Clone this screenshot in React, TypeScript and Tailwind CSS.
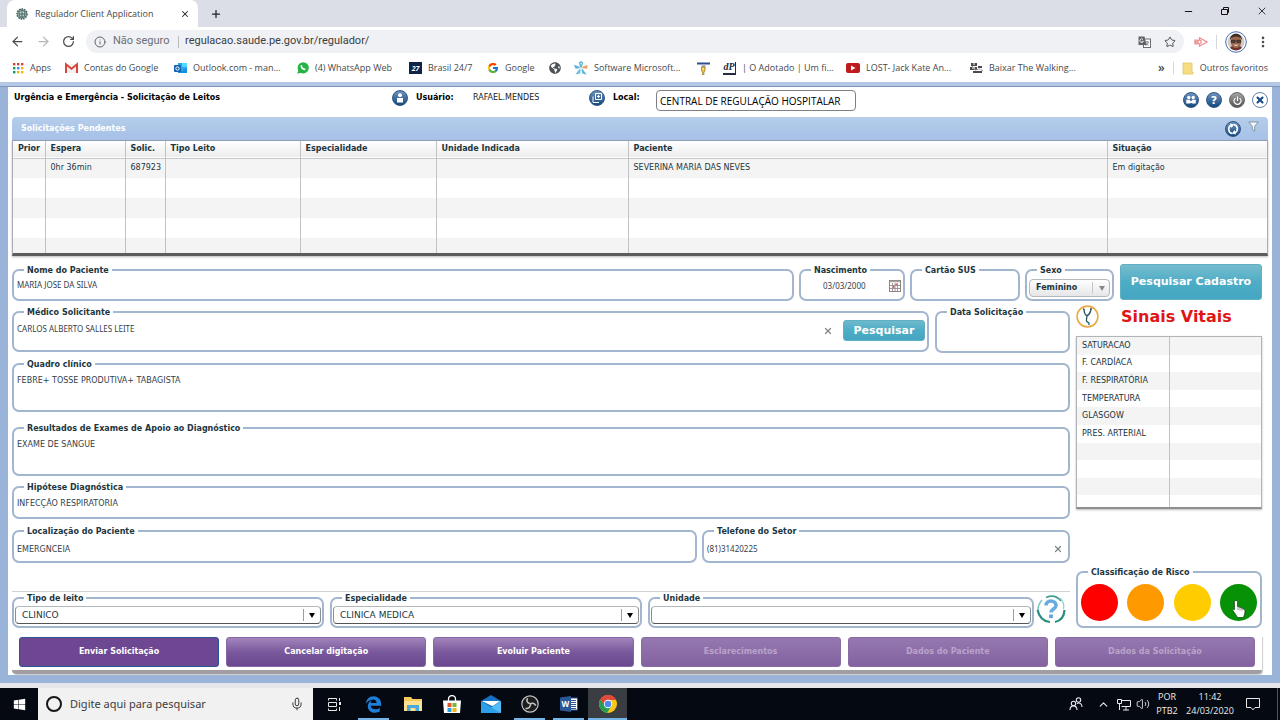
import React from 'react';
import { ArrowLeft, ArrowRight, RotateCw, Info, X, Plus, Star, Minus, MoreVertical, Mic, ChevronUp, Volume2, Power } from 'lucide-react';
import { FcGoogle } from 'react-icons/fc';
import { FaWhatsapp, FaWindows, FaEdgeLegacy, FaGlobeAmericas } from 'react-icons/fa';

interface FieldProps {
    id: string;
    label: string;
    className?: string;
    children?: React.ReactNode;
}

const Field: React.FC<FieldProps> = ({ id, label, className = '', children }) => (
    <fieldset className={`min-w-0 rounded-[7px] border-2 border-[#a3b6d0] ${className}`}>
        <legend className="ml-[10px] px-[3px] h-3 text-[8px] leading-[14px] font-bold text-[#1c3640] whitespace-nowrap">
            <label htmlFor={id}>{label}</label>
        </legend>
        {children}
    </fieldset>
);

const inputClass = 'block w-full min-w-0 bg-transparent px-[3px] text-[8px] leading-3 text-[#33414a] outline-none resize-none';
const narrowInput = `${inputClass} font-['Noto_Sans',sans-serif]`;

/* ---------- ícones ---------- */

const CrestIcon = () => (
    <svg width="12" height="12" viewBox="0 0 12 12">
        <circle cx="6" cy="6" r="5" fill="#8faaa2" stroke="#3c5e5a" strokeWidth="1.500" strokeDasharray="1.500 1" />
        <path d="M3 4l3-2 3 2-1 5H4z" fill="#d5dfdc" stroke="#31525c" strokeWidth=".8" />
        <path d="M6 3v6M4 6h4" stroke="#3a5f54" />
    </svg>
);

const AppsIcon = () => (
    <svg width="12" height="12" viewBox="0 0 12 12">
        {['#db4437', '#db4437', '#db4437', '#0f9d58', '#4285f4', '#f4b400', '#0f9d58', '#f4b400', '#f4b400'].map((c, i) => (
            <rect key={i} x={1 + (i % 3) * 4} y={1 + Math.floor(i / 3) * 4} width="2.4" height="2.4" fill={c} />
        ))}
    </svg>
);

const GmailIcon = () => (
    <svg width="13" height="12" viewBox="0 0 13 12">
        <path d="M1 2h11v9H1z" fill="#f1f1f1" />
        <path d="M1 11V2.3l5.5 4.5L12 2.3V11" fill="none" stroke="#d8453a" strokeWidth="2" />
    </svg>
);

const OutlookIcon = () => (
    <svg width="13" height="12" viewBox="0 0 13 12">
        <path d="M4 1h9v10H4z" fill="#28a8ea" />
        <path d="M8 1h5v4H8z" fill="#50d9ff" />
        <path d="M4 6l4 3 5-3v5H4z" fill="#1490df" />
        <rect y="3" width="7" height="7" rx="1" fill="#0f62b5" />
        <circle cx="3.5" cy="6.5" r="1.7" fill="none" stroke="#fff" />
    </svg>
);

const WhatsIcon = () => (
    <svg width="12" height="12" viewBox="0 0 12 12">
        <circle cx="6.200" cy="5.800" r="5.600" fill="#25b343" />
        <path d="M.3 11.700L1.500 8l2.700 2.700z" fill="#25b343" />
        <path d="M3.800 3.300c.9-1 1.500.2 1.600 1-.6.7 1.400 2.500 2 2 .8 0 1.800.8 1 1.500-1.800 1.700-6-2.200-4.600-4.500z" fill="#fff" />
    </svg>
);

const Badge247 = () => (
    <span className="flex h-3 w-[13px] items-center justify-center bg-[#0d2347] text-[7px] font-bold italic leading-none text-white">27</span>
);

const StarfishIcon = () => (
    <svg width="14" height="14" viewBox="0 0 14 14" fill="none" strokeWidth="1.4">
        <path d="M7 6L5.500 2 7 .8 8.500 2z" stroke="#5ab5da" />
        <path d="M8.500 6.500L12.800 5 12.500 7z" stroke="#e5a46a" />
        <path d="M8 8.500l3 4-2-.5z" stroke="#5ab5da" />
        <path d="M6 8.500l-3 4 2.500-.5z" stroke="#6cc0dd" />
        <path d="M5.500 6.500L1.200 5l.8 2z" stroke="#5ab5da" />
    </svg>
);

const TIcon = () => (
    <svg width="13" height="13" viewBox="0 0 13 13">
        <path d="M0 1.500h13" stroke="#2e4d8c" strokeWidth="2" />
        <path d="M4.500 2.500v4h4v-4" fill="#a9b7cf" />
        <path d="M4.500 5h3.500v4l-1 1v3H5.500v-3l-1-1z" fill="#f0b93c" stroke="#8d6b2c" strokeWidth=".6" />
        <circle cx="6.200" cy="7" r=".8" fill="#fff" />
    </svg>
);

const DpIcon = () => (
    <span className="flex h-[13px] w-[13px] items-center justify-center border-b-2 border-r border-[#222c3c] font-['Liberation_Serif',serif] text-[10px] font-bold italic leading-none text-[#222c3c]">dP</span>
);

const YoutubeIcon = () => (
    <svg width="14" height="12" viewBox="0 0 14 12">
        <rect y="1" width="14" height="10" rx="2" fill="#c01a1c" />
        <path d="M5 3.500v5L9.500 6z" fill="#fff" />
    </svg>
);

const WalkingIcon = () => (
    <svg width="13" height="12" viewBox="0 0 13 12">
        <path d="M1 1h6v3H1zM0 5h7v3H0zM3 9h9v2H3zM8 4h4v2H8z" fill="#4a4a4a" />
        <path d="M2 4l3 4 5-1 3 2" stroke="#8a8a8a" fill="none" />
        <path d="M3 2h2M2 6h3M8 8h3" stroke="#fff" />
    </svg>
);

const FolderIcon = () => (
    <svg width="12" height="13" viewBox="0 0 12 13">
        <path d="M1 1h9v9h1v2H1z" fill="#f6dd82" stroke="#e3c768" strokeWidth=".8" />
    </svg>
);

const TranslateIcon = () => (
    <svg width="13" height="12" viewBox="0 0 13 12">
        <rect x="5.500" y="3" width="7" height="8.500" fill="#fff" stroke="#6b6e72" />
        <path d="M7 6h4M9 5v1M7.500 9.500c2-1 2.500-2 2.700-3.500M8 7.500l2.500 2" stroke="#6b6e72" strokeWidth=".8" fill="none" />
        <path d="M.5.5h6l2 8.500h-8z" fill="#5f6368" />
        <path d="M5 3.500a1.800 1.800 0 1 0 .3 1.800H3.800" stroke="#fff" strokeWidth=".9" fill="none" />
    </svg>
);

const ExtensionIcon = () => (
    <svg width="14" height="12" viewBox="0 0 14 12" fill="none" stroke="#ef9090" strokeWidth="1.300">
        <path d="M5.500 4V1.800L13 6l-7.500 4.200V8" />
        <path d="M1.200 3.500v5M3.200 3.500v5" strokeWidth="1.800" />
        <circle cx="5.500" cy="6" r="1.800" />
    </svg>
);

const AvatarIcon = () => (
    <svg width="22" height="22" viewBox="0 0 22 22">
        <circle cx="11" cy="11" r="10.300" fill="#fff" stroke="#4a6fb0" />
        <circle cx="11" cy="11" r="8.500" fill="#d4cbc4" />
        <path d="M5 17c1-2 3-2.500 6-2.500s5 .5 6 2.500a8.500 8.500 0 0 1-12 0z" fill="#6e332c" />
        <ellipse cx="11" cy="10.800" rx="5.400" ry="6.300" fill="#9a6a50" />
        <path d="M5 9.500C4.500.5 17.500.5 17 9.500c-1-3-3-4-6-4s-5 1-6 4z" fill="#3a2a24" />
        <path d="M6.500 9.300h3.600v2H6.500zM11.900 9.300h3.600v2h-3.600z" fill="#6d4c3e" stroke="#222" strokeWidth=".8" />
        <path d="M8.500 13.800q2.500 2 5 0z" fill="#fff" />
    </svg>
);

const RestoreIcon = () => (
    <svg width="10" height="10" viewBox="0 0 10 10" fill="none" stroke="#111">
        <path d="M1.500 3.500h6v5h-6z" />
        <path d="M3.500 3V1.500h5v5H8" />
    </svg>
);

interface OrbProps {
    label: string;
    tone?: 'blue' | 'gray' | 'white';
    children: React.ReactNode;
}

const Orb: React.FC<OrbProps> = ({ label, tone = 'blue', children }) => {
    const tones = {
        blue: 'bg-linear-to-b from-[#6f93bd] to-[#12497f] border-[#2b5584] text-white',
        gray: 'bg-linear-to-b from-[#a5a5a5] to-[#555] border-[#666] text-white',
        white: 'bg-white border-[#5f7fa8] text-[#1d4c86]'
    };
    return (
        <button type="button" aria-label={label} className={`flex size-4 shrink-0 items-center justify-center rounded-full border ${tones[tone]}`}>
            {children}
        </button>
    );
};

const FunnelIcon = () => (
    <svg width="11" height="11" viewBox="0 0 11 11">
        <path d="M.8 1h9.400L6.700 5.200V10L4.300 8.500V5.200z" fill="#f5f8fc" stroke="#71808f" strokeWidth=".8" />
    </svg>
);

const RefreshIcon = () => (
    <svg width="12" height="12" viewBox="0 0 12 12" fill="none" stroke="#fff" strokeWidth="1.600">
        <path d="M5.500 10.500C1 10 .5 4 4 2.200" />
        <path d="M6.500 1.500C11 2 11.500 8 8 9.800" />
        <path d="M3 .5l4 1L4.500 5zM9 11.500l-4-1L7.500 7z" fill="#fff" stroke="none" />
    </svg>
);

const PeoplePairIcon = () => (
    <svg width="12" height="10" viewBox="0 0 12 10" fill="#fff">
        <circle cx="3.800" cy="2.500" r="1.700" />
        <circle cx="8.200" cy="2.500" r="1.700" />
        <path d="M1.200 4.800h4v3.700h-4zM6.800 4.800h4v3.700h-4zM5 6h2v2H5z" />
    </svg>
);

const StethoscopeIcon = () => (
    <svg width="23" height="23" viewBox="0 0 23 23" fill="none">
        <circle cx="11.500" cy="11.500" r="10.400" fill="#fff" stroke="#eda848" strokeWidth="1.600" />
        <path d="M8 4.500c.3 3.500 1.500 6 3 6s3.500-2.500 4-6.500" stroke="#27525f" strokeWidth="1.400" />
        <path d="M11 10.500c0 3-1.500 5 0 6.200s2-.2 1.800 2.300" stroke="#27525f" strokeWidth="1.300" />
        <path d="M7 3.800l1.600.8M14.200 3.600l1.600.4" stroke="#27525f" strokeWidth="1.300" />
        <circle cx="13" cy="19" r="1.100" fill="#3f8fa5" />
    </svg>
);

const CalendarIcon = () => (
    <svg width="12" height="12" viewBox="0 0 12 12">
        <rect x=".5" y=".5" width="11" height="11" fill="#fff" stroke="#8b8584" />
        <path d="M1 1.500h10" stroke="#a9a3a3" strokeWidth="1.500" />
        <path d="M1 5.500h10M1 8.500h10M3.500 3v8M6 3v8M8.500 3v8" stroke="#9a8a8d" strokeWidth=".9" />
        <path d="M4 6h1.500v2H4zM6.500 3.500H8V5H6.500z" fill="#cf6f6d" />
    </svg>
);

const HelpSwirl = () => (
    <svg width="30" height="30" viewBox="0 0 30 30" fill="none">
        <path d="M10 3.500Q19-.5 25 7" stroke="#42a08f" strokeWidth="1.800" />
        <path d="M6 6Q0 13 3 20" stroke="#7cc6bb" strokeWidth="1.500" />
        <path d="M1.500 16Q4 27 14 28" stroke="#258f80" strokeWidth="2.200" />
        <path d="M19 28Q28 26 28.500 16" stroke="#258f80" strokeWidth="2.200" />
        <path d="M24 4Q29 9 27.500 15" stroke="#8dd0c8" strokeWidth="1.200" />
        <path d="M10 11.500c0-6 10-6 10 0 0 3.500-5 3.500-5 7" stroke="#69abdf" strokeWidth="3.600" />
        <rect x="13.200" y="20.500" width="3.600" height="3.600" fill="#5a9fd6" />
    </svg>
);

const HandCursor = () => (
    <svg width="14" height="20" viewBox="0 0 14 20">
        <path d="M4 1.500c1.300 0 1.600 1 1.600 2v4c1 0 1.700.2 1.900.8 1 0 1.700.2 1.900.8 1 0 1.700.3 1.800 1 1.500 0 1.800 1 1.800 2 0 3-.8 4-1.500 6.500H5.500C4.500 16.500 2.500 14 .8 11.500c-.4-1 .8-1.700 1.600-.8V3.500c0-1 .3-2 1.600-2z" fill="#fff" stroke="#1c3a1c" strokeWidth=".8" />
        <path d="M6 8v3M8 8.800v2.700M10 9.500v2.300" stroke="#555" strokeWidth=".6" />
    </svg>
);

const ChromeLogo = () => (
    <svg width="18" height="18" viewBox="0 0 18 18">
        <circle cx="9" cy="9" r="9" fill="#f9c716" />
        <path d="M9 9L1.200 4.500A9 9 0 0 0 8 17.900L12.500 11z" fill="#279c53" />
        <path d="M9 9L1.200 4.500A9 9 0 0 1 17 5H9z" fill="#df4a3c" />
        <path d="M1.200 4.500L5.500 11 9 5z" fill="#df4a3c" />
        <circle cx="9" cy="9" r="4.200" fill="#fff" />
        <circle cx="9" cy="9" r="3.300" fill="#4a8af0" />
    </svg>
);

const TaskViewIcon = () => (
    <svg width="14" height="13" viewBox="0 0 14 13" fill="none" stroke="#e8e8e8">
        <path d="M.5 2.500V.5h8v2M.5 10.500v2h8v-2M.5 4.500h8v4h-8zM11.500 0v3M11.500 9v4" />
        <rect x="11" y="4" width="2" height="3" fill="#e8e8e8" stroke="none" />
    </svg>
);

const ExplorerIcon = () => (
    <svg width="18" height="16" viewBox="0 0 18 16">
        <path d="M0 1h7l1.500 2H18v12H0z" fill="#f7ca5c" />
        <path d="M0 5h18v10H0z" fill="#fde18e" />
        <path d="M3 15V9h12v6h-3.500v-3h-5v3z" fill="#4aa9dd" />
    </svg>
);

const StoreIcon = () => (
    <svg width="20" height="19" viewBox="0 0 20 19">
        <path d="M6.500 6V4a3.500 3.500 0 0 1 7 0v2" stroke="#fff" strokeWidth="1.300" fill="none" />
        <path d="M1 5.500h18L18 18H2z" fill="#fff" />
        <path d="M5.500 8h4v4h-4z" fill="#e5532d" />
        <path d="M10.500 8h4v4h-4z" fill="#7cb82f" />
        <path d="M5.500 13h4v4h-4z" fill="#2ba0dd" />
        <path d="M10.500 13h4v4h-4z" fill="#f5b51b" />
    </svg>
);

const MailIcon = () => (
    <svg width="20" height="18" viewBox="0 0 20 18">
        <path d="M0 6l10-6 10 6v12H0z" fill="#1671c2" />
        <path d="M1 6h18L12 11 10 10.500z" fill="#fff" />
        <path d="M0 6l10 6.500L0 18z" fill="#2489d8" />
        <path d="M20 6l-9 6-11 6h20z" fill="#52bdf5" />
        <path d="M0 6l11 7 9 5H0z" fill="#2d9fe8" />
    </svg>
);

const ObsIcon = () => (
    <svg width="18" height="18" viewBox="0 0 18 18" fill="none" stroke="#c4c4c4">
        <circle cx="9" cy="9" r="8.200" fill="#1d1d1f" strokeWidth="1.200" />
        <path d="M6.500 3.200C5 6 6.500 8.500 9.500 8.800" strokeWidth="1.600" />
        <path d="M14.800 10.500C13 7.800 10.500 7.800 9 9.300" strokeWidth="1.600" />
        <path d="M4.500 13.500c3.200.3 5-1.500 5-4.200" strokeWidth="1.600" />
    </svg>
);

const WordIcon = () => (
    <span className="relative flex h-[16px] w-[18px] items-center">
        <svg width="18" height="16" viewBox="0 0 18 16">
            <path d="M9 2h8.500v12H9z" fill="#fff" stroke="#2b5797" />
            <path d="M11 4.500h5M11 6.500h5M11 8.500h5M11 10.500h5M11 12.500h5" stroke="#2b5797" />
            <path d="M0 1.500L11 0v16L0 14.500z" fill="#2b5797" />
        </svg>
        <span className="absolute left-[2px] top-[3px] text-[8px] font-bold leading-[10px] text-white">W</span>
    </span>
);

const NetworkIcon = () => (
    <svg width="14" height="13" viewBox="0 0 14 13" fill="none" stroke="#e8e8e8">
        <path d="M4.500 2.500h9v6h-9M9 9v3M6 12h6M.5 1.500h4v4h-4zM2.500 6v6" />
    </svg>
);

const PeopleIcon = () => (
    <svg width="14" height="14" viewBox="0 0 14 14" fill="none" stroke="#e8e8e8" strokeWidth="1.100">
        <circle cx="4.500" cy="6.500" r="2.200" />
        <path d="M1 13c0-5.500 7-5.500 7 0" />
        <circle cx="9.500" cy="3" r="2.200" />
        <path d="M8 6.500c3-1.500 5 .5 5 3.500" />
    </svg>
);

const NotificationIcon = () => (
    <svg width="14" height="14" viewBox="0 0 14 14" fill="none" stroke="#e8e8e8">
        <path d="M.5 1.500h13v9H9L7 12.800 5 10.500H.5z" />
    </svg>
);

/* ---------- navegador ---------- */

const BOOKMARKS = [
    { label: 'Apps', icon: <AppsIcon />, width: 'w-[53px]' },
    { label: 'Contas do Google', icon: <GmailIcon />, width: 'w-[109px]' },
    { label: 'Outlook.com - man...', icon: <OutlookIcon />, width: 'w-[123px]' },
    { label: '(4) WhatsApp Web', icon: <WhatsIcon />, width: 'w-[112px]' },
    { label: 'Brasil 24/7', icon: <Badge247 />, width: 'w-[78px]' },
    { label: 'Google', icon: <FcGoogle size={12} />, width: 'w-[62px]' },
    { label: '', icon: <FaGlobeAmericas size={12} className="text-[#4d5156]" />, width: 'w-[25px]' },
    { label: 'Software Microsoft...', icon: <StarfishIcon />, width: 'w-[123px]' },
    { label: '', icon: <TIcon />, width: 'w-[26px]' },
    { label: '| O Adotado | Um fi...', icon: <DpIcon />, width: 'w-[123px]' },
    { label: 'LOST- Jack Kate An...', icon: <YoutubeIcon />, width: 'w-[124px]' },
    { label: 'Baixar The Walking...', icon: <WalkingIcon />, width: 'w-[124px]' }
];

const BrowserChrome = () => (
    <header className="bg-white font-['Open_Sans',sans-serif] text-[#45494d]">
        <div className="flex h-[27px] items-end bg-[#dbdee6]">
            <div className="ml-[7px] flex h-[27px] w-[191px] items-center rounded-t-lg bg-white pl-[9px] pr-2">
                <CrestIcon />
                <span className="ml-[7px] flex-1 whitespace-nowrap text-[9px]">Regulador Client Application</span>
                <button type="button" aria-label="Fechar guia"><X size={10} className="text-[#222]" strokeWidth={2.5} /></button>
            </div>
            <button type="button" aria-label="Nova guia" className="mb-[7px] ml-3"><Plus size={12} className="text-[#222]" strokeWidth={2.5} /></button>
            <div className="mb-[10px] ml-auto mr-3 flex items-center gap-[26px] text-black">
                <button type="button" aria-label="Minimizar"><Minus size={11} /></button>
                <button type="button" aria-label="Restaurar"><RestoreIcon /></button>
                <button type="button" aria-label="Fechar"><X size={12} strokeWidth={1.5} /></button>
            </div>
        </div>

        <div className="flex h-[29px] items-center pl-[10px] pr-[10px]">
            <button type="button" aria-label="Voltar"><ArrowLeft size={15} className="text-[#4a4d51]" /></button>
            <button type="button" aria-label="Avançar" className="ml-[11px]"><ArrowRight size={15} className="text-[#b5b7ba]" /></button>
            <button type="button" aria-label="Recarregar" className="ml-[11px]"><RotateCw size={13} className="text-[#4a4d51]" strokeWidth={2.3} /></button>
            <div className="ml-[11px] flex h-[23px] flex-1 items-center rounded-full bg-[#f0f1f4] px-2 font-[Roboto,sans-serif]">
                <Info size={12} className="text-[#5f6368]" />
                <span className="ml-[7px] w-[59px] whitespace-nowrap text-[11px] text-[#6b6f73]">Não seguro</span>
                <span className="mx-[6px] h-3 w-px bg-[#b9bbbe]" />
                <input aria-label="Endereço" className="min-w-0 flex-1 bg-transparent text-[11px] text-[#3a3d41] outline-none" defaultValue="regulacao.saude.pe.gov.br/regulador/" />
                <button type="button" aria-label="Traduzir"><TranslateIcon /></button>
                <button type="button" aria-label="Favorito" className="ml-[13px]"><Star size={12} className="text-[#4a4d51]" /></button>
            </div>
            <button type="button" aria-label="Extensão" className="ml-[10px]"><ExtensionIcon /></button>
            <span className="mx-2 h-[14px] w-px bg-[#d5d7da]" />
            <button type="button" aria-label="Perfil"><AvatarIcon /></button>
            <button type="button" aria-label="Menu" className="ml-[9px]"><MoreVertical size={14} className="text-[#4a4d51]" strokeWidth={2.5} /></button>
        </div>

        <nav className="flex h-[26px] items-center pb-[2px] pl-3 pr-3 text-[9px]">
            {BOOKMARKS.map((item, i) => (
                <a key={i} href="#" aria-label={item.label || 'Favorito'} className={`flex shrink-0 items-center gap-[6px] whitespace-nowrap ${item.width}`}>
                    <span className="shrink-0">{item.icon}</span>
                    {item.label}
                </a>
            ))}
            <button type="button" className="ml-auto text-[12px] font-semibold leading-3">»</button>
            <span className="mx-2 h-3 w-px bg-[#d5d7da]" />
            <a href="#" className="flex items-center gap-[6px] whitespace-nowrap">
                <FolderIcon />
                Outros favoritos
            </a>
        </nav>
    </header>
);

/* ---------- sistema ---------- */

const COLUMNS = [
    { label: 'Prior', width: 'w-[32px]', value: '' },
    { label: 'Espera', width: 'w-[80px]', value: '0hr 36min' },
    { label: 'Solic.', width: 'w-[40px]', value: '687923' },
    { label: 'Tipo Leito', width: 'w-[135px]', value: '' },
    { label: 'Especialidade', width: 'w-[136px]', value: '' },
    { label: 'Unidade Indicada', width: 'w-[192px]', value: '' },
    { label: 'Paciente', width: '', value: 'SEVERINA MARIA DAS NEVES' },
    { label: 'Situação', width: 'w-[160px]', value: 'Em digitação' }
];

const VITAIS = ['SATURACAO', 'F. CARDÍACA', 'F. RESPIRATÓRIA', 'TEMPERATURA', 'GLASGOW', 'PRES. ARTERIAL', '', '', '', ''];

const RISCOS = [
    { label: 'Vermelho', color: 'bg-[#fe0000]' },
    { label: 'Laranja', color: 'bg-[#ff9900]' },
    { label: 'Amarelo', color: 'bg-[#ffcc00]' },
    { label: 'Verde', color: 'bg-[#079107]' }
];

const ACTIONS = [
    { label: 'Enviar Solicitação', style: 'bg-[#6d4791] border-[#2d5596] text-white' },
    { label: 'Cancelar digitação', style: 'bg-linear-to-b from-[#a384bb] via-[#7a589c] to-[#6a478f] border-[#8667a5] text-white' },
    { label: 'Evoluir Paciente', style: 'bg-linear-to-b from-[#a384bb] via-[#7a589c] to-[#6a478f] border-[#8667a5] text-white' },
    { label: 'Esclarecimentos', style: 'bg-linear-to-b from-[#9678b0] to-[#83629f] border-[#8a6ba6] text-[#b9a3ca]', disabled: true },
    { label: 'Dados do Paciente', style: 'bg-linear-to-b from-[#9678b0] to-[#83629f] border-[#8a6ba6] text-[#b9a3ca]', disabled: true },
    { label: 'Dados da Solicitação', style: 'bg-linear-to-b from-[#9678b0] to-[#83629f] border-[#8a6ba6] text-[#b9a3ca]', disabled: true }
];

const PendingTable = () => (
    <section>
        <div className="flex h-[23px] items-center rounded-t bg-linear-to-b from-[#b5cdea] to-[#a6c1e8] pl-[9px] pr-[9px]">
            <h2 className="text-[8px] font-bold text-white">Solicitações Pendentes</h2>
            <div className="ml-auto flex items-center gap-[7px]">
                <Orb label="Atualizar"><RefreshIcon /></Orb>
                <button type="button" aria-label="Filtrar" className="pb-1"><FunnelIcon /></button>
            </div>
        </div>
        <div className="h-[116px] overflow-hidden border-x border-b-[3px] border-t border-x-[#a9adb3] border-b-[#5c5c5e] border-t-[#8fa0b5] shadow-[0_1px_2px_#bbb]">
            <table className="w-full table-fixed border-collapse text-left text-[8px] text-[#1c3640]">
                <thead>
                    <tr className="h-[17px] border-b border-[#c5c8ca] bg-linear-to-b from-white to-[#ededed]">
                        {COLUMNS.map((c, i) => (
                            <th key={c.label} className={`whitespace-nowrap p-0 pl-[5px] font-bold leading-3 ${i ? 'border-l border-[#c0c3c6]' : ''} ${c.width}`}>{c.label}</th>
                        ))}
                    </tr>
                </thead>
                <tbody>
                    {[0, 1, 2, 3, 4].map((row) => (
                        <tr key={row} className="h-5 odd:bg-[#f4f4f4]">
                            {COLUMNS.map((c, i) => (
                                <td key={c.label} className={`whitespace-nowrap p-0 pl-[5px] leading-3 ${i ? 'border-l border-[#c0c3c6]' : ''}`}>{row === 0 ? c.value : ''}</td>
                            ))}
                        </tr>
                    ))}
                </tbody>
            </table>
        </div>
    </section>
);

interface ComboProps {
    id: string;
    label: string;
    value: string;
    className: string;
}

const Combo: React.FC<ComboProps> = ({ id, label, value, className }) => (
    <Field id={id} label={label} className={`h-9 ${className}`}>
        <div className="relative mx-[1px] mt-[2px]">
            <select id={id} defaultValue={value} className="block h-[18px] w-full appearance-none rounded border border-x-[#8a8f94] border-b-[#555] border-t-[#b5b8bb] bg-white px-[6px] text-[9px] leading-3 text-[#1c3640] outline-none">
                <option>{value}</option>
            </select>
            <span className="pointer-events-none absolute right-[6px] top-[3px] flex h-3 items-center border-l border-[#9a9da0] pl-[5px] text-black">
                <svg width="6" height="5" viewBox="0 0 6 5"><path d="M0 0h6L3 5z" fill="currentColor" /></svg>
            </span>
        </div>
    </Field>
);

const RequestForm = () => (
    <form className="mt-2 flex flex-col pr-[6px]" onSubmit={(e) => e.preventDefault()}>
        <div className="flex gap-[5px]">
            <Field id="nome" label="Nome do Paciente" className="h-[37px] flex-1">
                <input id="nome" className={`${narrowInput} mt-[3px]`} defaultValue="MARIA JOSE DA SILVA" />
            </Field>
            <Field id="nascimento" label="Nascimento" className="h-[37px] w-[106px]">
                <div className="mt-1 flex items-center pl-[19px] pr-[2px]">
                    <input id="nascimento" className={narrowInput} defaultValue="03/03/2000" />
                    <button type="button" aria-label="Abrir calendário"><CalendarIcon /></button>
                </div>
            </Field>
            <Field id="sus" label="Cartão SUS" className="h-[37px] w-[110px]">
                <input id="sus" className={`${inputClass} mt-[3px]`} />
            </Field>
            <Field id="sexo" label="Sexo" className="h-[37px] w-[89px]">
                <div className="relative mx-[2px] mt-[3px]">
                    <select id="sexo" defaultValue="Feminino" className="block h-[18px] w-full appearance-none rounded border border-[#b7babc] bg-linear-to-b from-white to-[#e6e6e8] px-[6px] text-[8px] font-bold leading-3 text-[#1c3640] outline-none">
                        <option>Feminino</option>
                        <option>Masculino</option>
                    </select>
                    <span className="pointer-events-none absolute right-[5px] top-[3px] flex h-3 items-center border-l border-[#c5c8ca] pl-[6px] text-[#888]">
                        <svg width="6" height="5" viewBox="0 0 6 5"><path d="M0 0h6L3 5z" fill="currentColor" /></svg>
                    </span>
                </div>
            </Field>
            <button type="button" className="ml-px h-9 w-[142px] whitespace-nowrap rounded-[3px] border border-[#5fb0c5] bg-linear-to-b from-[#76bccd] via-[#4dadc6] to-[#45a6c2] text-[11px] font-bold text-white">Pesquisar Cadastro</button>
        </div>

        <div className="mt-[2px] flex gap-[6px]">
            <div className="flex min-w-0 flex-1 flex-col pt-[3px]">
                <div className="flex gap-[6px]">
                    <Field id="medico" label="Médico Solicitante" className="h-[46px] flex-1">
                        <div className="flex items-center pr-[2px] pt-[2px]">
                            <input id="medico" className={`${narrowInput} pb-1`} defaultValue="CARLOS ALBERTO SALLES LEITE" />
                            <button type="button" aria-label="Limpar médico"><X size={10} className="text-[#808488]" strokeWidth={3} /></button>
                            <button type="button" className="ml-[10px] h-[21px] w-[82px] shrink-0 rounded-[3px] border border-[#5fb0c5] bg-linear-to-b from-[#6db9cb] via-[#4dadc6] to-[#45a6c2] text-[11px] font-bold leading-3 text-white">Pesquisar</button>
                        </div>
                    </Field>
                    <Field id="data" label="Data Solicitação" className="h-[47px] w-[135px]">
                        <input id="data" className={inputClass} />
                    </Field>
                </div>
                <Field id="quadro" label="Quadro clínico" className="mt-[5px] h-[54px]">
                    <textarea id="quadro" className={`${inputClass} mt-[5px] h-7`} defaultValue="FEBRE+ TOSSE PRODUTIVA+ TABAGISTA" />
                </Field>
                <Field id="exames" label="Resultados de Exames de Apoio ao Diagnóstico" className="mt-[10px] h-[54px]">
                    <textarea id="exames" className={`${inputClass} mt-[5px] h-7`} defaultValue="EXAME DE SANGUE" />
                </Field>
                <Field id="hipotese" label="Hipótese Diagnóstica" className="mt-[5px] h-[38px]">
                    <input id="hipotese" className={`${inputClass} mt-[5px]`} defaultValue="INFECÇÃO RESPIRATORIA" />
                </Field>
                <div className="mt-[6px] flex gap-[5px]">
                    <Field id="localizacao" label="Localização do Paciente" className="h-[38px] w-[685px]">
                        <input id="localizacao" className={`${inputClass} mt-[7px]`} defaultValue="EMERGNCEIA" />
                    </Field>
                    <Field id="telefone" label="Telefone do Setor" className="h-[38px] flex-1">
                        <div className="mt-[6px] flex items-center pr-[5px]">
                            <input id="telefone" className={narrowInput} defaultValue="(81)31420225" />
                            <button type="button" aria-label="Limpar telefone"><X size={10} className="text-[#808488]" strokeWidth={3} /></button>
                        </div>
                    </Field>
                </div>
                <div className="mt-[28px] flex gap-[6px] border-t border-[#cfd3d6]">
                    <Combo id="tipo" label="Tipo de leito" value="CLINICO" className="w-[312px]" />
                    <Combo id="especialidade" label="Especialidade" value="CLINICA MEDICA" className="w-[312px]" />
                    <Combo id="unidade" label="Unidade" value="" className="flex-1" />
                    <button type="button" aria-label="Ajuda" className="-ml-1 mr-1 mt-[2px] self-start"><HelpSwirl /></button>
                </div>
            </div>

            <aside className="flex w-[186px] flex-col">
                <div className="flex h-[33px] items-center pb-[7px]">
                    <StethoscopeIcon />
                    <h2 className="ml-[22px] whitespace-nowrap pt-[2px] text-[16px] font-bold leading-5 text-[#e01515]">Sinais Vitais</h2>
                </div>
                <div className="h-[173px] overflow-hidden border border-b-2 border-[#b2b5b7] border-b-[#8c8f91] shadow-[0_1px_2px_#bbb]">
                    <table className="h-[176px] w-full table-fixed border-collapse text-left text-[8px] leading-3 text-[#22313a]">
                        <tbody>
                            {VITAIS.map((v, i) => (
                                <tr key={i} className="h-[17px] odd:bg-[#f4f4f4]">
                                    <th scope="row" className="whitespace-nowrap p-0 pl-[5px] font-normal">{v}</th>
                                    <td className="border-l border-[#c0c3c6] p-0" />
                                </tr>
                            ))}
                        </tbody>
                    </table>
                </div>
                <fieldset className="mt-auto h-[62px] rounded-[7px] border-2 border-[#a3b6d0]">
                    <legend className="ml-[10px] h-3 px-[3px] text-[8px] font-bold leading-[14px] text-[#1c3640]">Classificação de Risco</legend>
                    <div className="flex justify-between px-[3px] pt-[6px]">
                        {RISCOS.map((r) => (
                            <button key={r.label} type="button" aria-label={r.label} className={`relative size-[37px] rounded-full ${r.color}`}>
                                {r.label === 'Verde' && <span className="absolute left-[12px] top-[15px]"><HandCursor /></span>}
                            </button>
                        ))}
                    </div>
                </fieldset>
            </aside>
        </div>

        <div className="mt-2 grid grid-cols-6 gap-[7px] rounded-b border-b-4 border-b-[#a09ea0] px-[7px] pb-[3px] pt-[1px] shadow-[1px_1px_1px_#ccc]">
            {ACTIONS.map((a) => (
                <button key={a.label} type="button" disabled={a.disabled} className={`h-[30px] whitespace-nowrap rounded-[3px] border text-[8px] font-bold ${a.style}`}>{a.label}</button>
            ))}
        </div>
    </form>
);

const AppHeader = () => (
    <div className="flex h-[30px] items-start pt-[3px] text-[8px] leading-4 text-[#222]">
        <h1 className="ml-[2px] w-[378px] font-bold text-black">Urgência e Emergência - Solicitação de Leitos</h1>
        <Orb label="Usuário">
            <svg width="8" height="10" viewBox="0 0 8 10" fill="currentColor"><circle cx="4" cy="2.300" r="2" /><path d="M1 5h6v4.500H1z" /></svg>
        </Orb>
        <span className="ml-2 w-[57px] font-bold text-black">Usuário:</span>
        <span className="w-[116px]">RAFAEL.MENDES</span>
        <Orb label="Local">
            <svg width="10" height="10" viewBox="0 0 10 10" fill="none" stroke="currentColor"><path d="M3.500.5h6v6h-6zM1 3.500v6h6M6.500 2v3M5 3.500h3" /></svg>
        </Orb>
        <label htmlFor="local" className="ml-2 w-[43px] font-bold text-black">Local:</label>
        <input id="local" className="h-[21px] w-[200px] rounded-sm border border-[#7d8084] px-[3px] font-['Open_Sans',sans-serif] text-[10px] text-black outline-none" defaultValue="CENTRAL DE REGULAÇÃO HOSPITALAR" />
        <div className="ml-auto flex gap-[7px] pt-[2px]">
            <Orb label="Usuários"><PeoplePairIcon /></Orb>
            <Orb label="Ajuda"><span className="text-[11px] font-bold leading-none">?</span></Orb>
            <Orb label="Sair" tone="gray"><Power size={9} strokeWidth={3} /></Orb>
            <Orb label="Fechar" tone="white"><X size={10} strokeWidth={5} /></Orb>
        </div>
    </div>
);

/* ---------- barra de tarefas ---------- */

const TASKS = [
    { label: 'Visão de tarefas', icon: <TaskViewIcon />, state: '' },
    { label: 'Edge', icon: <FaEdgeLegacy size={17} className="text-[#1d7fd8]" />, state: 'open' },
    { label: 'Explorador', icon: <ExplorerIcon />, state: '' },
    { label: 'Loja', icon: <StoreIcon />, state: '' },
    { label: 'Email', icon: <MailIcon />, state: '' },
    { label: 'OBS', icon: <ObsIcon />, state: 'open' },
    { label: 'Word', icon: <WordIcon />, state: 'open' },
    { label: 'Chrome', icon: <ChromeLogo />, state: 'active' }
];

const Taskbar = () => (
    <footer className="flex h-8 bg-[#040912] font-['Open_Sans',sans-serif] text-[#ececec]">
        <button type="button" aria-label="Iniciar" className="flex w-[38px] items-center justify-center text-white"><FaWindows size={13} /></button>
        <div className="flex w-[275px] items-center bg-[#f1f1f1] pl-2 pr-[9px] text-[#3c3c3c]">
            <span className="size-4 rounded-full border-[2px] border-[#161616]" />
            <input aria-label="Pesquisar" placeholder="Digite aqui para pesquisar" className="ml-2 min-w-0 flex-1 bg-transparent font-['Noto_Sans',sans-serif] text-[11px] outline-none placeholder:text-[#3c3c3c]" />
            <Mic size={14} strokeWidth={1.700} />
        </div>
        <nav className="flex pl-[2px]">
            {TASKS.map((t) => (
                <button key={t.label} type="button" aria-label={t.label} className={`relative flex w-[39px] items-center justify-center ${t.state === 'active' ? 'bg-[#3a3d41]' : ''}`}>
                    {t.icon}
                    {t.state && <span className={`absolute bottom-0 h-[2px] bg-[#75b4e6] ${t.state === 'active' ? 'inset-x-0' : 'inset-x-1'}`} />}
                </button>
            ))}
        </nav>
        <div className="ml-auto flex items-center text-[9px] leading-[14px]">
            <PeopleIcon />
            <ChevronUp size={13} className="ml-[14px]" />
            <span className="ml-[7px]"><NetworkIcon /></span>
            <Volume2 size={14} strokeWidth={1.500} className="ml-[5px]" />
            <span className="ml-[6px] w-[22px] whitespace-nowrap text-center">POR<br />PTB2</span>
            <span className="ml-[8px] w-[48px] whitespace-nowrap text-center">11:42<br />24/03/2020</span>
            <span className="ml-[12px] mr-[17px]"><NotificationIcon /></span>
            <span className="h-8 w-px bg-[#555]" />
            <span className="w-[2px]" />
        </div>
    </footer>
);

export default function App() {
    return (
        <div className="flex min-h-screen flex-col bg-white font-['DejaVu_Sans',Verdana,sans-serif]">
            <BrowserChrome />
            <main className="flex-1 border-b-[5px] border-b-[#e4e6ea] bg-[#9ab3d8]">
                <div className="h-[5px] border-b border-[#7b95bd] bg-[#b4c8e6]" />
                <div className="mx-2 mb-2 bg-white px-1 pb-px">
                    <AppHeader />
                    <PendingTable />
                    <RequestForm />
                </div>
            </main>
            <Taskbar />
        </div>
    );
}
